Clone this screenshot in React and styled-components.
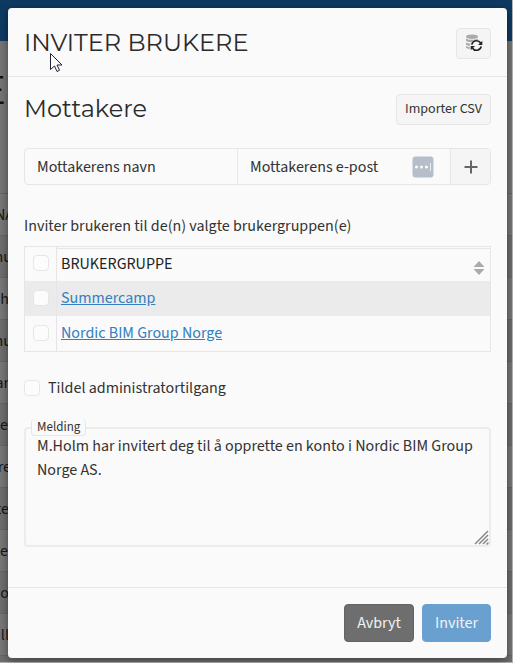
import React, { useState } from 'react'
import styled, { createGlobalStyle } from 'styled-components'

const bodyFont = '"Source Sans Pro", "Source Sans 3", "Noto Sans CJK JP", "Noto Sans", sans-serif'
const headingFont = 'Montserrat, Inter, sans-serif'
const line = '#e6e6e6'

const GlobalStyle = createGlobalStyle`
  *, *::before, *::after {
    box-sizing: border-box;
  }
  body {
    margin: 0;
    background: #757575;
    color: #333;
    font-family: ${bodyFont};
    font-size: 16px;
    line-height: 24px;
  }
  button, input, textarea {
    font: inherit;
    color: inherit;
  }
`

const Page = styled.div`
  position: relative;
  min-height: 100vh;
`

const Backdrop = styled.div`
  position: absolute;
  inset: 0;
  overflow: hidden;
  border: solid #b4b4b4;
  border-width: 0 1px 1px 0;
`

const TopBar = styled.div`
  height: 41px;
  background: #0e3a62;
`

const PageTitle = styled.div`
  display: flex;
  justify-content: flex-end;
  width: 6px;
  height: 152px;
  padding-top: 29px;
  overflow: hidden;
  color: #111;
  font-family: ${headingFont};
  font-size: 40px;
  line-height: 40px;
`

const BackRow = styled.div`
  display: flex;
  height: 42px;
  align-items: center;
  border-top: 1px solid #666;
  background: ${props => (props.$dark ? '#6e6e6e' : '#777')};
`

const BackText = styled.span`
  display: flex;
  justify-content: flex-end;
  width: ${props => props.$end}px;
  color: #151515;
`

const Overlay = styled.div`
  position: relative;
  padding: 8px 6px 5px 8px;
`

const Dialog = styled.form`
  border-radius: 4px;
  background: #fafafa;
  box-shadow: 0 2px 8px rgba(0, 0, 0, 0.45);
`

const Header = styled.header`
  display: flex;
  align-items: center;
  justify-content: space-between;
  height: 69px;
  padding: 2px 16px 0;
  border-bottom: 1px solid ${line};
`

const Heading = styled.h1`
  margin: 0;
  color: #2b2b2b;
  font-family: ${headingFont};
  font-size: 24px;
  font-weight: 400;
  line-height: 32px;
`

const Button = styled.button`
  display: inline-flex;
  align-items: center;
  justify-content: center;
  height: 31px;
  padding: 0 8px;
  border: 1px solid ${line};
  border-radius: 4px;
  background: #f5f5f5;
  font-size: 14px;
`

const IconButton = styled(Button)`
  width: 35px;
  padding: 0;
`

const Body = styled.div`
  padding: 16px 16px 40px;
`

const SectionHead = styled.div`
  display: flex;
  align-items: center;
  justify-content: space-between;
  height: 32px;
  margin-bottom: 23px;
`

const InputGroup = styled.div`
  display: flex;
  height: 37px;
  border: 1px solid ${line};
  border-radius: 4px;
  overflow: hidden;
`

const Field = styled.label`
  position: relative;
  display: flex;
  flex: 1;
  min-width: 0;
  align-items: center;
  border-right: 1px solid ${line};

  input {
    width: 100%;
    height: 100%;
    padding: 0 12px;
    border: 0;
    background: transparent;
    outline: 0;
  }
  input::placeholder {
    color: #333;
    opacity: 1;
  }
  svg {
    position: absolute;
    right: 16px;
  }
`

const AddButton = styled.button`
  display: flex;
  align-items: center;
  justify-content: center;
  width: 39px;
  padding: 0;
  border: 0;
  background: #f5f5f5;
`

const Hint = styled.p`
  margin: 29px 0 8px;
`

const Table = styled.table`
  width: 100%;
  border: 1px solid ${line};
  border-collapse: separate;
  border-spacing: 0;
  table-layout: fixed;
`

const CheckCell = styled.td`
  width: 32px;
  padding: 0 0 2px 8px;
  border-right: 1px solid ${line};
  vertical-align: middle;
`

const NameCell = styled.td`
  height: 35px;
  padding: 0 4px 2px;
  text-align: left;
`

const HeadCell = styled.th`
  height: 34px;
  padding: 0 5px 0 4px;
  color: #222;
  font-weight: 400;
  text-align: left;
  vertical-align: top;

  div {
    display: flex;
    align-items: center;
    justify-content: space-between;
    margin: 1px -5px 0 -4px;
    padding: 3px 5px 3px 4px;
    border-top: 1px solid ${line};
  }
  svg {
    margin-top: 8px;
  }
`

const Row = styled.tr`
  background: ${props => (props.$shaded ? '#ebebeb' : 'transparent')};
`

const Link = styled.a`
  color: #337fc0;
  text-decoration: underline;
`

const Checkbox = styled.input.attrs({ type: 'checkbox' })`
  display: block;
  flex: none;
  width: 16px;
  height: 16px;
  margin: 0;
  border: 1px solid ${line};
  border-radius: 4px;
  background: #fcfcfc;
  appearance: none;

  &:checked {
    background: #6aa0d0;
  }
`

const CheckLabel = styled.label`
  display: flex;
  align-items: center;
  gap: 8px;
  margin: 24px 0 27px;
`

const MessageBox = styled.div`
  position: relative;
  display: flex;

  label {
    position: absolute;
    top: -8px;
    left: 7px;
    padding: 0 5px;
    border: solid ${line};
    border-width: 0 1px 1px;
    border-radius: 4px;
    background: #fafafa;
    font-size: 13px;
    line-height: 16px;
  }
  textarea {
    width: 100%;
    height: 120px;
    padding: 5px 11px;
    border: 2px solid #ececec;
    border-radius: 4px;
    background: transparent;
    outline: 0;
    resize: none;
  }
  svg {
    position: absolute;
    right: 2px;
    bottom: 2px;
  }
`

const Footer = styled.footer`
  display: flex;
  justify-content: flex-end;
  gap: 8px;
  padding: 16px;
  border-top: 1px solid ${line};
`

const FooterButton = styled.button`
  height: 38px;
  padding: 0 12px;
  border: 1px solid ${props => (props.$primary ? '#6aa0d0' : '#646464')};
  border-radius: 4px;
  background: ${props => (props.$primary ? '#6aa0d0' : '#6e6e6e')};
  color: #f2f2f2;
`

const Pointer = styled.svg`
  position: absolute;
  top: 52px;
  left: 49px;
`

// end: where the visible tail of each cell stops, measured from the page edge
const backRows = [
  { text: 'NA', end: 14 },
  { text: 'nu', end: 12 },
  { text: 'h', end: 9 },
  { text: 'nu', end: 12 },
  { text: 'ar', end: 9 },
  { text: 'e', end: 8 },
  { text: 're', end: 11 },
  { text: 'te', end: 9 },
  { text: 'e', end: 8 },
  { text: 'o', end: 9 },
  { text: 'ill', end: 9 },
  { text: '', end: 8 }
]
const groups = ['Summercamp', 'Nordic BIM Group Norge']

const DatabaseSyncIcon = () => (
  <svg width="18" height="18" viewBox="0 0 18 18" fill="none">
    <ellipse cx="7" cy="2.700" rx="6" ry="2.300" fill="#aaa" />
    <path d="M1 4.500c2 1.800 9 1.800 12 0v1.300c-3 0-5 .7-6.500 2.500C4 8.200 1.500 7.700 1 6.800zM1 8.200c1.200 1 2.800 1.300 4.600 1.400l-.6 2.200c-2-.1-3.500-.6-4-1.300zM1 11.800c1 .8 2.300 1.200 3.800 1.300v2C3 14.900 1.200 14.400 1 13.600z" fill="#aaa" />
    <path d="M6.800 10.600a4.800 4.800 0 0 1 8.800-1.600M16.200 12.400a4.800 4.800 0 0 1-8.800 1.600" stroke="#222" strokeWidth="1.600" />
    <path d="M17.300 6.800v4.200h-4.300zM5.700 16.200V12h4.300z" fill="#222" />
  </svg>
)

const AutofillIcon = () => (
  <svg width="22" height="22" viewBox="0 0 22 22">
    <rect x="0.500" y="0.500" width="21" height="21" rx="3" fill="#b6beca" />
    <circle cx="4.500" cy="11" r="1.500" fill="#fff" />
    <circle cx="9.500" cy="11" r="1.500" fill="#fff" />
    <circle cx="14.500" cy="11" r="1.500" fill="#fff" />
    <path d="M18.500 7v8" stroke="#e8ebef" />
  </svg>
)

const App = () => {
  const [checked, setChecked] = useState({})
  const [admin, setAdmin] = useState(false)
  const [message, setMessage] = useState(
    'M.Holm har invitert deg til å opprette en konto i Nordic BIM Group Norge AS.'
  )

  const allChecked = groups.every(group => checked[group])
  const toggleAll = () => {
    setChecked(Object.fromEntries(groups.map(group => [group, !allChecked])))
  }

  return (
    <>
      <GlobalStyle />
      <Page>
        <Backdrop aria-hidden="true">
          <TopBar />
          <PageTitle>E</PageTitle>
          {backRows.map((row, i) => (
            <BackRow key={i} $dark={i % 2 === 1}>
              <BackText $end={row.end}>{row.text}</BackText>
            </BackRow>
          ))}
        </Backdrop>
        <Overlay>
          <Dialog role="dialog" aria-labelledby="dialog-title" onSubmit={e => e.preventDefault()}>
            <Header>
              <Heading id="dialog-title">INVITER BRUKERE</Heading>
              <IconButton type="button" aria-label="Oppdater">
                <DatabaseSyncIcon />
              </IconButton>
            </Header>
            <Body>
              <SectionHead>
                <Heading as="h2">Mottakere</Heading>
                <Button type="button">Importer CSV</Button>
              </SectionHead>
              <InputGroup>
                <Field>
                  <input type="text" placeholder="Mottakerens navn" aria-label="Mottakerens navn" />
                </Field>
                <Field>
                  <input type="email" placeholder="Mottakerens e-post" aria-label="Mottakerens e-post" />
                  <AutofillIcon />
                </Field>
                <AddButton type="button" aria-label="Legg til">
                  <svg width="14" height="14" viewBox="0 0 14 14" stroke="#666" strokeWidth="2">
                    <path d="M7 0.500v13M0.500 7h13" />
                  </svg>
                </AddButton>
              </InputGroup>
              <Hint>Inviter brukeren til de(n) valgte brukergruppen(e)</Hint>
              <Table>
                <thead>
                  <tr>
                    <CheckCell as="th">
                      <Checkbox aria-label="Velg alle" checked={allChecked} onChange={toggleAll} />
                    </CheckCell>
                    <HeadCell>
                      <div>
                        BRUKERGRUPPE
                        <svg width="12" height="16" viewBox="0 0 12 16" fill="#aaa">
                          <path d="M6 1l5.500 6h-11zM0.500 9h11L6 15z" />
                        </svg>
                      </div>
                    </HeadCell>
                  </tr>
                </thead>
                <tbody>
                  {groups.map((group, i) => (
                    <Row key={group} $shaded={i % 2 === 0}>
                      <CheckCell>
                        <Checkbox
                          aria-label={group}
                          checked={!!checked[group]}
                          onChange={() => setChecked({ ...checked, [group]: !checked[group] })}
                        />
                      </CheckCell>
                      <NameCell>
                        <Link href="#">{group}</Link>
                      </NameCell>
                    </Row>
                  ))}
                </tbody>
              </Table>
              <CheckLabel>
                <Checkbox checked={admin} onChange={() => setAdmin(!admin)} />
                Tildel administratortilgang
              </CheckLabel>
              <MessageBox>
                <textarea id="message" value={message} onChange={e => setMessage(e.target.value)} />
                <label htmlFor="message">Melding</label>
                <svg width="15" height="15" viewBox="0 0 15 15" stroke="#888" strokeWidth="1.500">
                  <path d="M1 14L14 1M5 14l9-9M9 14l5-5M12.500 14.500l2-2" />
                </svg>
              </MessageBox>
            </Body>
            <Footer>
              <FooterButton type="button">Avbryt</FooterButton>
              <FooterButton type="submit" $primary>Inviter</FooterButton>
            </Footer>
          </Dialog>
        </Overlay>
        <Pointer width="15" height="22" viewBox="0 0 15 22" aria-hidden="true">
          <path d="M1.500 1.500v16l4-3.500 2.500 5.500 2.500-1.200-2.500-5.300h5z" fill="#fff" stroke="#223" />
        </Pointer>
      </Page>
    </>
  )
}

export default App
